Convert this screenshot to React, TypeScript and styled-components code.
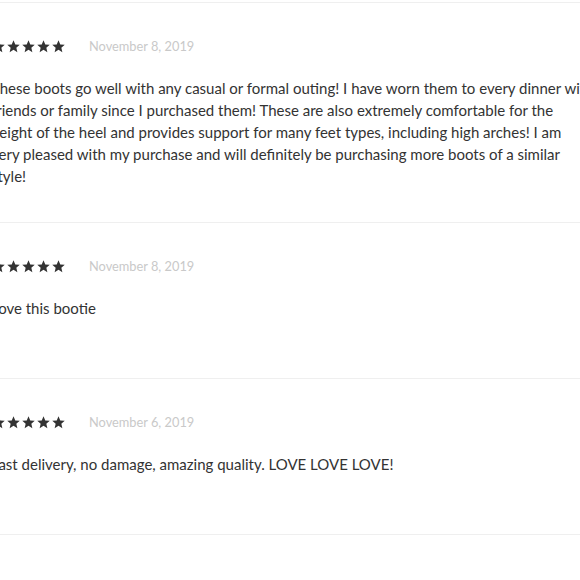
import React from "react";
import styled, { createGlobalStyle } from "styled-components";

const Global = createGlobalStyle`
  html, body { margin: 0; padding: 0; background: #fff; }
  body { font-family: Lato, "Open Sans", sans-serif; overflow: hidden; }
`;

const Page = styled.div`
  width: 620px;
  margin-left: -9px;
  padding-top: 2px;
`;

const List = styled.div`
  border-bottom: 1px solid #efefef;
`;

const Review = styled.div`
  border-top: 1px solid #efefef;
  padding: 36px 0 35px;
`;

const Meta = styled.div`
  display: flex;
  align-items: center;
  height: 14px;
  gap: 23px;
`;

const Stars = styled.div`
  display: flex;
  gap: 0;
`;

const DateText = styled.span`
  font-size: 12.8px;
  color: #c9c9c9;
`;

const Body = styled.p`
  margin: 24px 0 0;
  min-height: 46px;
  font-size: 15px;
  line-height: 22px;
  color: #333;
  white-space: pre;
`;

const Star = () => (
  <svg width="15" height="15" viewBox="0 0 24 24">
    <path
      fill="#333"
      d="M12 17.27L18.18 21l-1.64-7.03L22 9.24l-7.19-.61L12 2 9.19 8.63 2 9.24l5.46 4.73L5.82 21z"
    />
  </svg>
);

const reviews = [
  {
    date: "November 8, 2019",
    text:
      "These boots go well with any casual or formal outing! I have worn them to every dinner with\n" +
      "friends or family since I purchased them! These are also extremely comfortable for the\n" +
      "height of the heel and provides support for many feet types, including high arches! I am\n" +
      "very pleased with my purchase and will definitely be purchasing more boots of a similar\n" +
      "style!",
  },
  { date: "November 8, 2019", text: "Love this bootie" },
  {
    date: "November 6, 2019",
    text: "Fast delivery, no damage, amazing quality. LOVE LOVE LOVE!",
  },
];

export default function App() {
  return (
    <>
      <Global />
      <Page>
        <List>
          {reviews.map((r, i) => (
            <Review key={i}>
              <Meta>
                <Stars>
                  {[0, 1, 2, 3, 4].map((s) => (
                    <Star key={s} />
                  ))}
                </Stars>
                <DateText>{r.date}</DateText>
              </Meta>
              <Body>{r.text}</Body>
            </Review>
          ))}
        </List>
      </Page>
    </>
  );
}
